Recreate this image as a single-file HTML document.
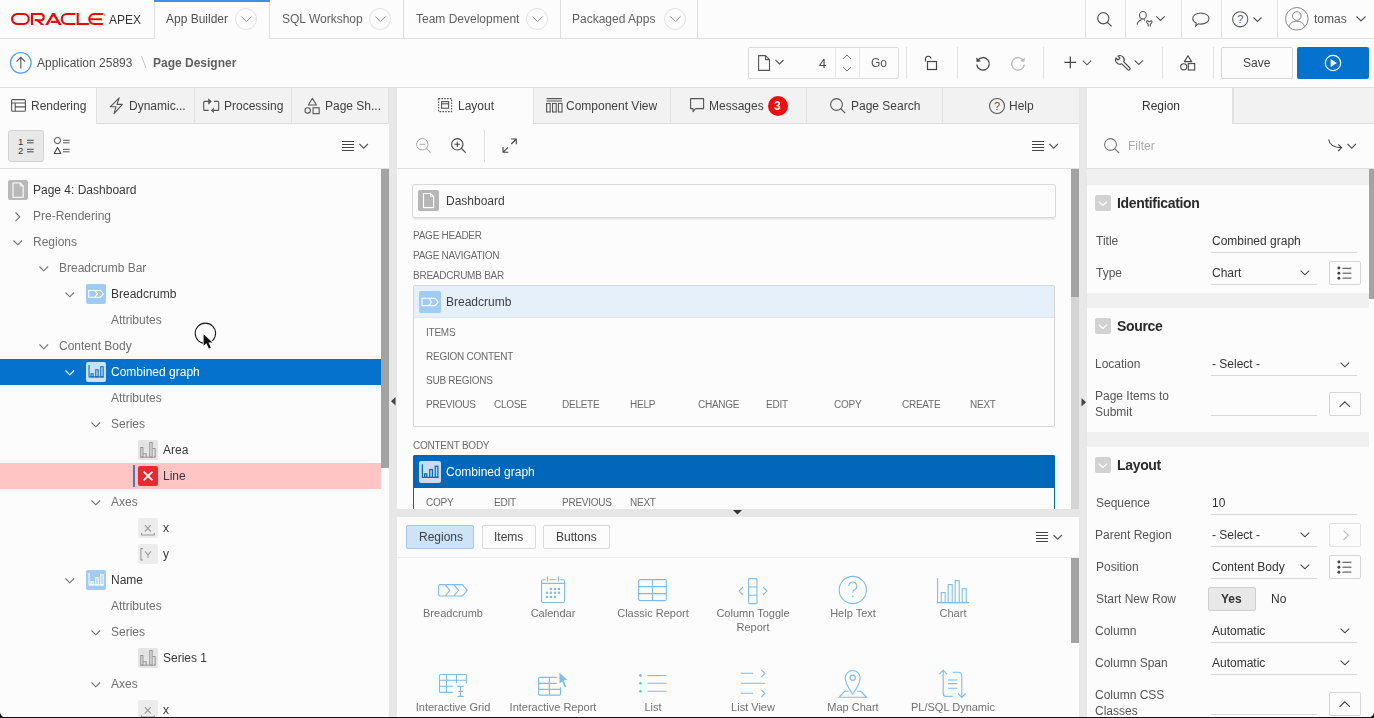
<!DOCTYPE html>
<html><head><meta charset="utf-8">
<style>
*{box-sizing:border-box;margin:0;padding:0}
html,body{width:1374px;height:718px;overflow:hidden;background:#fcfcfc;font-family:"Liberation Sans",sans-serif;color:#404040;position:relative}
.a{position:absolute}
svg{position:absolute;overflow:visible}
.t{position:absolute;white-space:nowrap;line-height:12px;font-size:12px;will-change:transform}
.ln{position:absolute;background:#dfdfdf}
.circ{position:absolute;width:22px;height:22px;border:1px solid #e2e2e2;border-radius:50%}
.tab{position:absolute;background:#f2f2f2;border-right:1px solid #e2e2e2;border-bottom:1px solid #dcdcdc;height:36px;top:88px}
.tab.act{background:#fcfcfc;border-bottom:none}
.sep{position:absolute;width:1px;background:#e0e0e0}
.g{color:#707070}
.d{color:#383838}
</style></head>
<body>
<!-- ============ HEADER ============ -->
<div class="ln" style="left:0;top:38px;width:154px;height:1px"></div>
<svg style="left:11px;top:12.8px" width="96" height="12" viewBox="0 0 96 12">
  <g fill="none" stroke="#f80000" stroke-width="2.1">
    <rect x="1.05" y="1.05" width="16.7" height="9.9" rx="4.95"/>
    <path d="M20.95 12 V1.05 H29.8 A3.08 3.08 0 0 1 29.8 7.2 H23.8"/>
    <path d="M64 1.05 H55.7 A4.95 4.95 0 0 0 55.7 10.95 H64"/>
    <path d="M66.7 0 V10.95 H77.8"/>
    <path d="M91.8 1.05 H83.2 A4.95 4.95 0 0 0 83.2 10.95 H91.8 M79 6.2 H90.8"/>
  </g>
  <g fill="#f80000">
    <path d="M23.6 6.1 H26.8 L33.2 12 H30 Z"/>
    <path d="M34.2 12 L41.3 0 H43.5 L50.6 12 H47.9 L42.4 2.7 L37 12 Z"/>
    <path d="M40.4 7.8 H47 L48.3 10 H39.6 Z"/>
  </g>
  <circle cx="93.6" cy="2" r="0.9" fill="#f88"/>
</svg>
<div class="t" style="left:109px;top:14px;color:#333">APEX</div>
<!-- nav tabs -->
<div class="a" style="left:154px;top:0;width:116px;height:39px;border-left:1px solid #dfdfdf;border-right:1px solid #dfdfdf"></div>
<div class="a" style="left:154px;top:0;width:116px;height:2px;background:#3b90e8"></div>
<div class="t" style="left:166px;top:13px;color:#505050">App Builder</div>
<div class="circ" style="left:235px;top:8px"></div>
<svg style="left:241px;top:16px" width="12" height="7"><path d="M0.5 0.6 L5.5 5.6 L10.5 0.6" fill="none" stroke="#888" stroke-width="1"/></svg>

<div class="ln" style="left:269px;top:38px;width:816px;height:1px"></div>
<div class="t" style="left:282px;top:13px;color:#606060">SQL Workshop</div>
<div class="circ" style="left:369px;top:8px"></div>
<svg style="left:375px;top:16px" width="12" height="7"><path d="M0.5 0.6 L5.5 5.6 L10.5 0.6" fill="none" stroke="#888" stroke-width="1"/></svg>
<div class="sep" style="left:403px;top:0;height:39px;background:#dfdfdf"></div>
<div class="t" style="left:416px;top:13px;color:#606060">Team Development</div>
<div class="circ" style="left:526px;top:8px"></div>
<svg style="left:532px;top:16px" width="12" height="7"><path d="M0.5 0.6 L5.5 5.6 L10.5 0.6" fill="none" stroke="#888" stroke-width="1"/></svg>
<div class="sep" style="left:560px;top:0;height:39px;background:#dfdfdf"></div>
<div class="t" style="left:572px;top:13px;color:#606060">Packaged Apps</div>
<div class="circ" style="left:664px;top:8px"></div>
<svg style="left:670px;top:16px" width="12" height="7"><path d="M0.5 0.6 L5.5 5.6 L10.5 0.6" fill="none" stroke="#888" stroke-width="1"/></svg>
<div class="sep" style="left:697px;top:0;height:39px;background:#dfdfdf"></div>
<!-- right header icons -->
<div class="ln" style="left:1085px;top:38px;width:289px;height:1px"></div>
<div class="sep" style="left:1085px;top:0;height:39px;background:#e2e2e2"></div>
<div class="sep" style="left:1125px;top:0;height:39px;background:#e2e2e2"></div>
<div class="sep" style="left:1181px;top:0;height:39px;background:#e2e2e2"></div>
<div class="sep" style="left:1221px;top:0;height:39px;background:#e2e2e2"></div>
<div class="sep" style="left:1277px;top:0;height:39px;background:#e2e2e2"></div>
<!-- search -->
<svg style="left:1097px;top:12px" width="16" height="15"><circle cx="6.3" cy="6.3" r="5.6" fill="none" stroke="#555" stroke-width="1.2"/><path d="M10.3 10.3 L14.6 14.4" stroke="#555" stroke-width="1.3"/></svg>
<!-- user wrench -->
<svg style="left:1136px;top:11px" width="30" height="17"><ellipse cx="6.9" cy="4.3" rx="3.4" ry="3.8" fill="none" stroke="#555" stroke-width="1.1"/><path d="M1.2 13.6 C1.4 10.6 3.4 9.6 5.6 8.6 M8.2 8.4 L8.7 9.7" fill="none" stroke="#555" stroke-width="1.1"/><path d="M11.2 9.5 C10.1 10.8 10.5 12.3 12.2 13 V15.5 M15.4 9.5 C16.5 10.8 16.1 12.3 14.4 13 V15.5 M11.2 9.5 L13.3 10.9 L15.4 9.5" fill="none" stroke="#555" stroke-width="1.1" stroke-linejoin="round"/><path d="M20.3 5.3 L24.5 9.5 L28.7 5.3" fill="none" stroke="#555" stroke-width="1.1"/></svg>
<!-- chat -->
<svg style="left:1192px;top:12px" width="18" height="15"><path d="M8.8 1 C13.5 1 17 3.5 17 6.6 C17 9.7 13.5 12.1 8.8 12.1 C7.8 12.1 7 12 6.2 11.8 L3.6 14.2 L4.2 11 C2.1 10 0.7 8.4 0.7 6.6 C0.7 3.5 4.2 1 8.8 1 Z" fill="none" stroke="#555" stroke-width="1.1"/></svg>
<!-- help -->
<svg style="left:1232px;top:11px" width="30" height="17"><circle cx="8.2" cy="8.3" r="7.6" fill="none" stroke="#555" stroke-width="1.1"/><text x="8.2" y="12.4" font-family="Liberation Sans" font-size="11" text-anchor="middle" fill="#555">?</text><path d="M21.5 6.5 L25.5 10.5 L29.5 6.5" fill="none" stroke="#555" stroke-width="1.1"/></svg>
<!-- user -->
<svg style="left:1285px;top:7px" width="25" height="25"><circle cx="11.8" cy="11.8" r="11.3" fill="none" stroke="#888" stroke-width="1"/><circle cx="11.8" cy="9" r="4.3" fill="none" stroke="#888" stroke-width="1"/><path d="M4 20 C5 15.5 8 14.3 11.8 14.3 C15.6 14.3 18.6 15.5 19.6 20" fill="none" stroke="#888" stroke-width="1"/></svg>
<div class="t" style="left:1314px;top:13px;color:#555">tomas</div>
<svg style="left:1356px;top:16px" width="10" height="6"><path d="M0.5 0.5 L5 5 L9.5 0.5" fill="none" stroke="#555" stroke-width="1.1"/></svg>

<!-- ============ TOOLBAR ============ -->
<div class="ln" style="left:0;top:87px;width:1374px;height:1px"></div>
<svg style="left:10px;top:52px" width="23" height="23"><circle cx="10.8" cy="10.8" r="10.3" fill="none" stroke="#4a9de8" stroke-width="1.2"/><path d="M10.8 16.5 V5.5 M6.5 9.6 L10.8 5.3 L15.1 9.6" fill="none" stroke="#555" stroke-width="1.1"/></svg>
<div class="t" style="left:37px;top:57px;color:#505050">Application 25893</div>
<svg style="left:141px;top:55px" width="6" height="14"><path d="M0.5 1 L5 13" stroke="#bbb" stroke-width="0.9"/></svg>
<div class="t" style="left:153px;top:57px;color:#606060;font-weight:bold">Page Designer</div>

<!-- page selector -->
<div class="a" style="left:748px;top:47px;width:151px;height:32px;border:1px solid #dcdcdc;border-radius:2px;background:#fcfcfc"></div>
<div class="sep" style="left:835px;top:48px;height:30px;background:#e6e6e6"></div>
<div class="sep" style="left:859px;top:48px;height:30px;background:#e6e6e6"></div>
<svg style="left:758px;top:55px" width="30" height="16"><path d="M0.6 0.6 H7.5 L11.5 4.6 V15.4 H0.6 Z M7.5 0.6 V4.6 H11.5" fill="none" stroke="#555" stroke-width="1.1" stroke-linejoin="round"/><path d="M17.5 5 L21.5 9 L25.5 5" fill="none" stroke="#555" stroke-width="1.1"/></svg>
<div class="t" style="left:819px;top:57px;font-size:13px;line-height:13px;color:#444">4</div>
<svg style="left:842px;top:54px" width="11" height="20"><path d="M1 5 L5 1 L9 5 M1 13 L5 17 L9 13" fill="none" stroke="#777" stroke-width="1"/></svg>
<div class="t" style="left:871px;top:57px;color:#555">Go</div>
<div class="sep" style="left:906px;top:47px;height:32px"></div>
<svg style="left:923px;top:55px" width="16" height="16"><path d="M2.5 6.5 V3.5 A2.8 2.8 0 0 1 8 3.5" fill="none" stroke="#444" stroke-width="1.2"/><rect x="4.5" y="6.5" width="9" height="8" fill="none" stroke="#444" stroke-width="1.2"/></svg>
<div class="sep" style="left:957px;top:47px;height:32px"></div>
<svg style="left:975px;top:56px" width="16" height="16"><path d="M2.8 4.2 A6.3 6.3 0 1 1 1.7 8.6" fill="none" stroke="#444" stroke-width="1.3"/><path d="M1.2 1.5 L1.6 6 L6 5.2 Z" fill="#444"/></svg>
<svg style="left:1011px;top:56px" width="16" height="16"><path d="M12.2 4.2 A6.3 6.3 0 1 0 13.3 8.6" fill="none" stroke="#bbb" stroke-width="1.3"/><path d="M13.8 1.5 L13.4 6 L9 5.2 Z" fill="#bbb"/></svg>
<div class="sep" style="left:1043px;top:47px;height:32px"></div>
<svg style="left:1064px;top:56px" width="28" height="14"><path d="M6.3 0.5 V12.3 M0.4 6.4 H12.2" fill="none" stroke="#444" stroke-width="1.2"/><path d="M18.8 4.6 L23 8.8 L27.2 4.6" fill="none" stroke="#555" stroke-width="1.1"/></svg>
<svg style="left:1115px;top:55px" width="30" height="17"><g transform="translate(4.9 4.9) rotate(45)"><path d="M-4.1 -1.4 H-1.2 V1.4 H-4.1 A4.35 4.35 0 0 0 4.1 1.4 H12.5 A1.4 1.4 0 0 0 12.5 -1.4 H4.1 A4.35 4.35 0 0 0 -4.1 -1.4 Z" fill="none" stroke="#444" stroke-width="1.1" stroke-linejoin="round"/></g><path d="M19.6 5.3 L23.8 9.5 L28 5.3" fill="none" stroke="#555" stroke-width="1.1"/></svg>
<div class="sep" style="left:1162px;top:47px;height:32px"></div>
<svg style="left:1180px;top:55px" width="16" height="16"><path d="M8 0.7 L11.6 6.6 H4.4 Z" fill="none" stroke="#444" stroke-width="1.1" stroke-linejoin="round"/><circle cx="3.7" cy="11.8" r="3.1" fill="none" stroke="#444" stroke-width="1.1"/><rect x="8.3" y="8.6" width="6.4" height="6.4" fill="none" stroke="#444" stroke-width="1.1"/></svg>
<div class="sep" style="left:1213px;top:47px;height:32px"></div>
<div class="a" style="left:1221px;top:47px;width:72px;height:32px;border:1px solid #d6d6d6;border-radius:2px;background:#fcfcfc"></div>
<div class="t" style="left:1243px;top:57px;color:#444">Save</div>
<div class="a" style="left:1297px;top:47px;width:72px;height:32px;border-radius:2px;background:#0572ce"></div>
<svg style="left:1324px;top:54px" width="18" height="18"><circle cx="9" cy="9" r="7.7" fill="none" stroke="#fff" stroke-width="1.2"/><path d="M6.6 4.9 L12.9 9 L6.6 13.1 Z" fill="#fff"/></svg>

<!-- ============ TABS ROW ============ -->
<!-- left panel tabs -->
<div class="tab act" style="left:0;width:97px"></div>
<div class="tab" style="left:97px;width:98px;border-left:none"></div>
<div class="tab" style="left:195px;width:97px"></div>
<div class="tab" style="left:292px;width:97px"></div>
<svg style="left:11px;top:99px" width="16" height="14"><rect x="0.6" y="0.6" width="13.8" height="11.6" rx="1" fill="none" stroke="#555" stroke-width="1.1"/><path d="M0.6 4 H14.4 M4.2 4 V12.2 M4.2 7.9 H14.4" fill="none" stroke="#555" stroke-width="1.1"/></svg>
<div class="t" style="left:31px;top:100px;color:#404040">Rendering</div>
<svg style="left:109px;top:97px" width="16" height="18"><path d="M10.2 0.8 L1.2 9.8 H7 L5 16.6 L13.4 7.4 H8 Z" fill="none" stroke="#555" stroke-width="1.1" stroke-linejoin="round"/></svg>
<div class="t" style="left:129px;top:100px;color:#404040">Dynamic...</div>
<svg style="left:202px;top:97px" width="20" height="18"><path d="M6.7 4.4 H2.7 A1 1 0 0 0 1.7 5.4 V12.4 A1 1 0 0 0 2.7 13.4 H6.7 M12 4.4 H15.7 A1 1 0 0 1 16.7 5.4 V12.4 A1 1 0 0 1 15.7 13.4 H11.5" fill="none" stroke="#555" stroke-width="1.1"/><path d="M6.2 1.2 L9.8 4.4 L6.2 7.7 Z M8.9 13.4 L11.8 10.6 V16.1 Z" fill="#555"/></svg>
<div class="t" style="left:224px;top:100px;color:#404040">Processing</div>
<svg style="left:303px;top:96px" width="18" height="19"><path d="M9.4 2.3 L13.4 9 H5.4 Z" fill="none" stroke="#555" stroke-width="1.1" stroke-linejoin="round"/><circle cx="4.7" cy="14.45" r="2.7" fill="none" stroke="#555" stroke-width="1.1"/><rect x="10.05" y="11.75" width="6.1" height="5.9" fill="none" stroke="#555" stroke-width="1.1"/></svg>
<div class="t" style="left:325px;top:100px;color:#404040">Page Sh...</div>
<!-- splitters -->
<div class="a" style="left:389px;top:88px;width:8px;height:630px;background:#e8e8e8"></div>
<div class="a" style="left:1079px;top:88px;width:8px;height:630px;background:#e8e8e8"></div>
<!-- middle tabs -->
<div class="tab act" style="left:397px;width:137px"></div>
<div class="tab" style="left:534px;width:137px;border-left:none"></div>
<div class="tab" style="left:671px;width:136px"></div>
<div class="tab" style="left:807px;width:136px"></div>
<div class="tab" style="left:943px;width:136px;border-right:none"></div>
<svg style="left:438px;top:98px" width="15" height="15"><rect x="0.6" y="0.6" width="13" height="13" fill="none" stroke="#555" stroke-width="1.1" stroke-dasharray="1.6 1.2"/><rect x="3.6" y="3.6" width="7" height="6.6" fill="none" stroke="#555" stroke-width="1.1"/><path d="M3.6 5.8 H10.6" stroke="#555" stroke-width="1.1"/></svg>
<div class="t" style="left:458px;top:100px;color:#404040">Layout</div>
<svg style="left:546px;top:98px" width="17" height="15"><path d="M0.6 0.6 H16 M0.6 3 H16" fill="none" stroke="#555" stroke-width="1.1"/><rect x="0.6" y="5.5" width="3.6" height="8.5" fill="none" stroke="#555" stroke-width="1.1"/><rect x="6.6" y="5.5" width="3.6" height="8.5" fill="none" stroke="#555" stroke-width="1.1"/><rect x="12.4" y="5.5" width="3.6" height="8.5" fill="none" stroke="#555" stroke-width="1.1"/></svg>
<div class="t" style="left:566px;top:100px;color:#404040">Component View</div>
<svg style="left:690px;top:98px" width="15" height="16"><path d="M0.6 0.6 H13.6 V10.6 H5.5 L3 13.6 V10.6 H0.6 Z" fill="none" stroke="#555" stroke-width="1.1" stroke-linejoin="round"/></svg>
<div class="t" style="left:709px;top:100px;color:#404040">Messages</div>
<div class="a" style="left:768px;top:96px;width:20px;height:20px;border-radius:50%;background:#f00d0d"></div>
<div class="t" style="left:774px;top:100px;color:#fff;font-weight:bold">3</div>
<svg style="left:830px;top:98px" width="17" height="17"><circle cx="6.5" cy="6.5" r="5.9" fill="none" stroke="#555" stroke-width="1.1"/><path d="M10.7 10.7 L15.2 15.2" stroke="#555" stroke-width="1.2"/></svg>
<div class="t" style="left:851px;top:100px;color:#404040">Page Search</div>
<svg style="left:989px;top:98px" width="17" height="17"><circle cx="8" cy="8" r="7.5" fill="none" stroke="#555" stroke-width="1.1"/><text x="8" y="12" font-family="Liberation Sans" font-size="11" text-anchor="middle" fill="#555">?</text></svg>
<div class="t" style="left:1009px;top:100px;color:#404040">Help</div>
<!-- right tabs -->
<div class="tab act" style="left:1087px;width:146px"></div>
<div class="tab" style="left:1233px;width:141px;border-right:none;border-left:1px solid #e2e2e2"></div>
<div class="t" style="left:1142px;top:100px;color:#333">Region</div>

<!-- ============ LEFT PANEL ============ -->
<div class="ln" style="left:0;top:168px;width:389px;height:1px"></div>
<div class="a" style="left:8px;top:130px;width:36px;height:32px;background:#e8e8e8;border:1px solid #d2d2d2;border-radius:3px"></div>
<svg style="left:18px;top:137px" width="17" height="18"><text x="0" y="7.8" font-family="Liberation Sans" font-size="9.5" fill="#333">1</text><text x="0" y="16.8" font-family="Liberation Sans" font-size="9.5" fill="#333">2</text><path d="M9 3.3 H15.6 M9 5.8 H15.6 M9 12.3 H15.6 M9 14.8 H15.6" stroke="#333" stroke-width="0.9"/></svg>
<svg style="left:53px;top:137px" width="17" height="18"><circle cx="4.5" cy="3.5" r="3.1" fill="none" stroke="#444" stroke-width="1"/><path d="M4.5 10.4 L7.8 16.5 H1.2 Z" fill="none" stroke="#444" stroke-width="1.1" stroke-linejoin="round"/><path d="M10 3.3 H16.6 M10 5.8 H16.6 M10 12.3 H16.6 M10 14.8 H16.6" stroke="#444" stroke-width="0.9"/></svg>
<svg style="left:342px;top:141px" width="28" height="12"><path d="M0 0.5 H12 M0 3.5 H12 M0 6.5 H12 M0 9.5 H12" stroke="#444" stroke-width="1"/><path d="M17.5 3 L21.7 7.2 L25.9 3" fill="none" stroke="#555" stroke-width="1.1"/></svg>
<div class="a" style="left:381px;top:169px;width:8px;height:299px;background:#a3a3a3"></div>
<div class="a" style="left:8px;top:180px;width:20px;height:20px;background:#b9b9b9;border-radius:2px"></div>
<svg style="left:8px;top:180px" width="20" height="20"><path d="M5 3 H12.2 L15.2 6 V17.3 H5 Z" fill="none" stroke="#fff" stroke-width="1.1"/><path d="M12.2 3 V6 H15.2" fill="none" stroke="#fff" stroke-width="0.8"/></svg>
<div class="t" style="left:33px;top:184px;color:#383838">Page 4: Dashboard</div>
<svg style="left:15px;top:212px" width="6" height="10"><path d="M0.5 0.5 L4.8 4.8 L0.5 9.1" fill="none" stroke="#707070" stroke-width="1.1"/></svg>
<div class="t" style="left:33px;top:210px;color:#707070">Pre-Rendering</div>
<svg style="left:13px;top:240px" width="10" height="6"><path d="M0.5 0.5 L4.8 4.8 L9.1 0.5" fill="none" stroke="#707070" stroke-width="1.1"/></svg>
<div class="t" style="left:33px;top:236px;color:#707070">Regions</div>
<svg style="left:39px;top:266px" width="10" height="6"><path d="M0.5 0.5 L4.8 4.8 L9.1 0.5" fill="none" stroke="#707070" stroke-width="1.1"/></svg>
<div class="t" style="left:59px;top:262px;color:#707070">Breadcrumb Bar</div>
<svg style="left:65px;top:292px" width="10" height="6"><path d="M0.5 0.5 L4.8 4.8 L9.1 0.5" fill="none" stroke="#707070" stroke-width="1.1"/></svg>
<div class="a" style="left:86px;top:284px;width:20px;height:20px;background:#9fcbf4;border-radius:2px"></div>
<svg style="left:86px;top:284px" width="20" height="20"><path d="M2.7 6.5 H14.6 L17.4 9.85 L14.6 13.2 H2.7 Z M8.9 6.5 L11.4 9.85 L8.9 13.2" fill="none" stroke="#fff" stroke-width="1.1" stroke-linejoin="miter"/></svg>
<div class="t" style="left:111px;top:288px;color:#383838">Breadcrumb</div>
<div class="t" style="left:111px;top:314px;color:#707070">Attributes</div>
<svg style="left:39px;top:344px" width="10" height="6"><path d="M0.5 0.5 L4.8 4.8 L9.1 0.5" fill="none" stroke="#707070" stroke-width="1.1"/></svg>
<div class="t" style="left:59px;top:340px;color:#707070">Content Body</div>
<div class="a" style="left:0;top:359px;width:381px;height:26px;background:#0572ce"></div>
<svg style="left:65px;top:370px" width="10" height="6"><path d="M0.5 0.5 L4.8 4.8 L9.1 0.5" fill="none" stroke="#fff" stroke-width="1.1"/></svg>
<div class="a" style="left:86px;top:362px;width:20px;height:20px;background:#cde0f4;border-radius:2px"></div>
<svg style="left:86px;top:362px" width="20" height="20"><path d="M3.05 3 V14.85 H17.7" fill="none" stroke="#0572ce" stroke-width="1.1"/><rect x="5.05" y="11.75" width="2.1" height="3.1" fill="none" stroke="#0572ce" stroke-width="1.1"/><rect x="9.75" y="7.75" width="2.4" height="7.1" fill="none" stroke="#0572ce" stroke-width="1.1"/><rect x="14.75" y="4.75" width="2.4" height="10.1" fill="none" stroke="#0572ce" stroke-width="1.1"/></svg>
<div class="t" style="left:111px;top:366px;color:#ffffff">Combined graph</div>
<div class="t" style="left:111px;top:392px;color:#707070">Attributes</div>
<svg style="left:91px;top:422px" width="10" height="6"><path d="M0.5 0.5 L4.8 4.8 L9.1 0.5" fill="none" stroke="#707070" stroke-width="1.1"/></svg>
<div class="t" style="left:111px;top:418px;color:#707070">Series</div>
<div class="a" style="left:138px;top:440px;width:20px;height:20px;background:#e4e4e4;border-radius:2px"></div>
<svg style="left:138px;top:440px" width="20" height="20"><g fill="none" stroke="#9a9a9a" stroke-width="1.1"><rect x="2.75" y="7.55" width="2.2" height="9.6"/><path d="M4.95 13.75 H8.15 V17.15"/><rect x="11.75" y="2.55" width="2.4" height="14.6"/><path d="M14.15 8.55 H17.15 V17.15"/><path d="M2.75 17.15 H17.15"/></g></svg>
<div class="t" style="left:163px;top:444px;color:#383838">Area</div>
<div class="a" style="left:0;top:463px;width:381px;height:26px;background:#ffc4c4"></div>
<div class="a" style="left:133px;top:465px;width:2px;height:22px;background:#4a78c4"></div>
<div class="a" style="left:138px;top:466px;width:20px;height:20px;background:#e82a2e;border-radius:2px"></div>
<svg style="left:138px;top:466px" width="20" height="20"><path d="M5.6 5.6 L14.4 14.4 M14.4 5.6 L5.6 14.4" stroke="#fff" stroke-width="1.8"/></svg>
<div class="t" style="left:163px;top:470px;color:#383838">Line</div>
<svg style="left:91px;top:500px" width="10" height="6"><path d="M0.5 0.5 L4.8 4.8 L9.1 0.5" fill="none" stroke="#707070" stroke-width="1.1"/></svg>
<div class="t" style="left:111px;top:496px;color:#707070">Axes</div>
<div class="a" style="left:138px;top:518px;width:20px;height:20px;background:#ececec;border-radius:2px"></div>
<svg style="left:138px;top:518px" width="20" height="20"><path d="M6.9 7.2 L12.8 13.5 M12.8 7.2 L6.9 13.5 M3.5 15 V17 H16.3 V15" fill="none" stroke="#9a9a9a" stroke-width="1.1"/></svg>
<div class="t" style="left:163px;top:522px;color:#383838">x</div>
<div class="a" style="left:138px;top:544px;width:20px;height:20px;background:#ececec;border-radius:2px"></div>
<svg style="left:138px;top:544px" width="20" height="20"><path d="M5 4.6 H2.9 V16 H5 M7.1 7.3 L10 11 L12.9 7.3 M10 11 V13.8" fill="none" stroke="#9a9a9a" stroke-width="1.1"/></svg>
<div class="t" style="left:163px;top:548px;color:#383838">y</div>
<svg style="left:65px;top:578px" width="10" height="6"><path d="M0.5 0.5 L4.8 4.8 L9.1 0.5" fill="none" stroke="#707070" stroke-width="1.1"/></svg>
<div class="a" style="left:86px;top:570px;width:20px;height:20px;background:#9fcbf4;border-radius:2px"></div>
<svg style="left:86px;top:570px" width="20" height="20"><path d="M3.05 3 V14.85 H17.7" fill="none" stroke="#fff" stroke-width="1.1"/><rect x="5.05" y="11.75" width="2.1" height="3.1" fill="none" stroke="#fff" stroke-width="1.1"/><rect x="9.75" y="7.75" width="2.4" height="7.1" fill="none" stroke="#fff" stroke-width="1.1"/><rect x="14.75" y="4.75" width="2.4" height="10.1" fill="none" stroke="#fff" stroke-width="1.1"/></svg>
<div class="t" style="left:111px;top:574px;color:#383838">Name</div>
<div class="t" style="left:111px;top:600px;color:#707070">Attributes</div>
<svg style="left:91px;top:630px" width="10" height="6"><path d="M0.5 0.5 L4.8 4.8 L9.1 0.5" fill="none" stroke="#707070" stroke-width="1.1"/></svg>
<div class="t" style="left:111px;top:626px;color:#707070">Series</div>
<div class="a" style="left:138px;top:648px;width:20px;height:20px;background:#e4e4e4;border-radius:2px"></div>
<svg style="left:138px;top:648px" width="20" height="20"><g fill="none" stroke="#9a9a9a" stroke-width="1.1"><rect x="2.75" y="7.55" width="2.2" height="9.6"/><path d="M4.95 13.75 H8.15 V17.15"/><rect x="11.75" y="2.55" width="2.4" height="14.6"/><path d="M14.15 8.55 H17.15 V17.15"/><path d="M2.75 17.15 H17.15"/></g></svg>
<div class="t" style="left:163px;top:652px;color:#383838">Series 1</div>
<svg style="left:91px;top:682px" width="10" height="6"><path d="M0.5 0.5 L4.8 4.8 L9.1 0.5" fill="none" stroke="#707070" stroke-width="1.1"/></svg>
<div class="t" style="left:111px;top:678px;color:#707070">Axes</div>
<div class="a" style="left:138px;top:700px;width:20px;height:20px;background:#ececec;border-radius:2px"></div>
<svg style="left:138px;top:700px" width="20" height="20"><path d="M6.9 7.2 L12.8 13.5 M12.8 7.2 L6.9 13.5 M3.5 15 V17 H16.3 V15" fill="none" stroke="#9a9a9a" stroke-width="1.1"/></svg>
<div class="t" style="left:163px;top:704px;color:#383838">x</div>
<svg style="left:194px;top:322px" width="26" height="30"><circle cx="11.4" cy="11.3" r="10.2" fill="none" stroke="#1a1a1a" stroke-width="1.05"/><g transform="translate(9.6 12.2)"><path d="M0 0 V11.6 L2.8 9 L5.2 14.4 L7.2 13.5 L4.9 8.4 L8.8 8.2 Z" fill="#111" stroke="#fff" stroke-width="1.6" stroke-linejoin="round" paint-order="stroke"/></g></svg>

<!-- ============ MIDDLE PANEL ============ -->
<div class="ln" style="left:397px;top:168px;width:682px;height:1px"></div>
<svg style="left:416px;top:138px" width="16" height="16"><circle cx="6.3" cy="6.3" r="5.7" fill="none" stroke="#aaa" stroke-width="1"/><path d="M3.5 6.3 H9.1" stroke="#aaa" stroke-width="1"/><path d="M10.4 10.4 L14.6 14.6" stroke="#aaa" stroke-width="1.1"/></svg>
<svg style="left:451px;top:138px" width="16" height="16"><circle cx="6.3" cy="6.3" r="5.7" fill="none" stroke="#444" stroke-width="1.1"/><path d="M3.5 6.3 H9.1 M6.3 3.5 V9.1" stroke="#444" stroke-width="1.1"/><path d="M10.4 10.4 L14.6 14.6" stroke="#444" stroke-width="1.2"/></svg>
<div class="sep" style="left:484px;top:130px;height:32px"></div>
<svg style="left:502px;top:138px" width="16" height="16"><path d="M1 14.3 L6 9.3 M1 9 V14.3 H6.3 M14.3 1 L9.3 6 M9 1 H14.3 V6.3" fill="none" stroke="#444" stroke-width="1.1"/></svg>
<svg style="left:1032px;top:141px" width="28" height="12"><path d="M0 0.5 H12 M0 3.5 H12 M0 6.5 H12 M0 9.5 H12" stroke="#444" stroke-width="1"/><path d="M17.5 3 L21.7 7.2 L25.9 3" fill="none" stroke="#555" stroke-width="1.1"/></svg>
<div class="a" style="left:1071px;top:169px;width:8px;height:340px;background:#d4d4d4"></div>
<div class="a" style="left:1071px;top:169px;width:8px;height:128px;background:#a3a3a3"></div>
<svg style="left:391px;top:397px" width="5" height="9"><path d="M4.5 0 V8.5 L0 4.25 Z" fill="#444"/></svg>
<svg style="left:1081px;top:398px" width="5" height="9"><path d="M0.5 0 V8.5 L5 4.25 Z" fill="#444"/></svg>
<div class="a" style="left:412px;top:184px;width:644px;height:34px;border:1px solid #d8d8d8;border-radius:3px;background:#fcfcfc;box-shadow:0 2px 0 #ececec"></div>
<div class="a" style="left:418px;top:190px;width:21px;height:21px;background:#b6b6b6;border-radius:2px"></div>
<svg style="left:418px;top:190px" width="21" height="21"><path d="M5.5 3.5 H12.6 L15.6 6.5 V17.6 H5.5 Z" fill="none" stroke="#fff" stroke-width="1.1"/><path d="M12.6 3.5 V6.5 H15.6" fill="none" stroke="#fff" stroke-width="0.8"/></svg>
<div class="t" style="left:446px;top:195px;color:#404040">Dashboard</div>
<div class="t" style="left:413px;top:231px;font-size:10px;line-height:10px;color:#6a6a6a;letter-spacing:-0.25px">PAGE HEADER</div>
<div class="t" style="left:413px;top:251px;font-size:10px;line-height:10px;color:#6a6a6a;letter-spacing:-0.25px">PAGE NAVIGATION</div>
<div class="t" style="left:413px;top:271px;font-size:10px;line-height:10px;color:#6a6a6a;letter-spacing:-0.25px">BREADCRUMB BAR</div>
<div class="a" style="left:413px;top:285px;width:642px;height:142px;border:1px solid #d6d6d6;border-radius:2px;background:#fcfcfc"></div>
<div class="a" style="left:414px;top:286px;width:640px;height:32px;background:#e6f0fa;border-bottom:1px solid #dde5ee"></div>
<div class="a" style="left:419px;top:291px;width:22px;height:22px;background:#9fcbf4;border-radius:2px"></div>
<svg style="left:419px;top:291px" width="22" height="22"><path d="M3 7.2 H16 L19.1 10.9 L16 14.6 H3 Z M9.8 7.2 L12.5 10.9 L9.8 14.6" fill="none" stroke="#fff" stroke-width="1.1"/></svg>
<div class="t" style="left:446px;top:296px;color:#404040">Breadcrumb</div>
<div class="t" style="left:426px;top:328px;font-size:10px;line-height:10px;color:#6a6a6a;letter-spacing:-0.25px">ITEMS</div>
<div class="t" style="left:426px;top:352px;font-size:10px;line-height:10px;color:#6a6a6a;letter-spacing:-0.25px">REGION CONTENT</div>
<div class="t" style="left:426px;top:376px;font-size:10px;line-height:10px;color:#6a6a6a;letter-spacing:-0.25px">SUB REGIONS</div>
<div class="t" style="left:426px;top:400px;font-size:10px;line-height:10px;color:#6a6a6a;letter-spacing:-0.25px">PREVIOUS</div>
<div class="t" style="left:494px;top:400px;font-size:10px;line-height:10px;color:#6a6a6a;letter-spacing:-0.25px">CLOSE</div>
<div class="t" style="left:562px;top:400px;font-size:10px;line-height:10px;color:#6a6a6a;letter-spacing:-0.25px">DELETE</div>
<div class="t" style="left:630px;top:400px;font-size:10px;line-height:10px;color:#6a6a6a;letter-spacing:-0.25px">HELP</div>
<div class="t" style="left:698px;top:400px;font-size:10px;line-height:10px;color:#6a6a6a;letter-spacing:-0.25px">CHANGE</div>
<div class="t" style="left:766px;top:400px;font-size:10px;line-height:10px;color:#6a6a6a;letter-spacing:-0.25px">EDIT</div>
<div class="t" style="left:834px;top:400px;font-size:10px;line-height:10px;color:#6a6a6a;letter-spacing:-0.25px">COPY</div>
<div class="t" style="left:902px;top:400px;font-size:10px;line-height:10px;color:#6a6a6a;letter-spacing:-0.25px">CREATE</div>
<div class="t" style="left:970px;top:400px;font-size:10px;line-height:10px;color:#6a6a6a;letter-spacing:-0.25px">NEXT</div>
<div class="t" style="left:413px;top:441px;font-size:10px;line-height:10px;color:#6a6a6a;letter-spacing:-0.25px">CONTENT BODY</div>
<div class="a" style="left:413px;top:455px;width:642px;height:60px;border:1px solid #0067b9;border-radius:2px 2px 0 0;background:#fcfcfc"></div>
<div class="a" style="left:413px;top:455px;width:642px;height:33px;background:#0067b9;border-radius:2px 2px 0 0"></div>
<div class="a" style="left:419px;top:461px;width:22px;height:22px;background:#c9dcf0;border-radius:2px"></div>
<svg style="left:419px;top:461px" width="22" height="22"><g transform="scale(1.1)"><path d="M3.05 3 V14.85 H17.7" fill="none" stroke="#0067b9" stroke-width="1.1"/><rect x="5.05" y="11.75" width="2.1" height="3.1" fill="none" stroke="#0067b9" stroke-width="1.1"/><rect x="9.75" y="7.75" width="2.4" height="7.1" fill="none" stroke="#0067b9" stroke-width="1.1"/><rect x="14.75" y="4.75" width="2.4" height="10.1" fill="none" stroke="#0067b9" stroke-width="1.1"/></g></svg>
<div class="t" style="left:446px;top:466px;color:#fff">Combined graph</div>
<div class="t" style="left:426px;top:498px;font-size:10px;line-height:10px;color:#6a6a6a;letter-spacing:-0.25px">COPY</div>
<div class="t" style="left:494px;top:498px;font-size:10px;line-height:10px;color:#6a6a6a;letter-spacing:-0.25px">EDIT</div>
<div class="t" style="left:562px;top:498px;font-size:10px;line-height:10px;color:#6a6a6a;letter-spacing:-0.25px">PREVIOUS</div>
<div class="t" style="left:630px;top:498px;font-size:10px;line-height:10px;color:#6a6a6a;letter-spacing:-0.25px">NEXT</div>
<div class="a" style="left:397px;top:509px;width:682px;height:8px;background:#e6e6e6"></div>
<svg style="left:733px;top:510px" width="10" height="5"><path d="M0 0 H9 L4.5 4.5 Z" fill="#333"/></svg>
<div class="a" style="left:406px;top:525px;width:68px;height:24px;background:#cde3f7;border:1px solid #a8c6e2;border-radius:2px"></div>
<div class="t" style="left:419px;top:531px;color:#404040">Regions</div>
<div class="a" style="left:482px;top:525px;width:54px;height:24px;background:#fcfcfc;border:1px solid #dadada;border-radius:2px"></div>
<div class="t" style="left:494px;top:531px;color:#404040">Items</div>
<div class="a" style="left:543px;top:525px;width:67px;height:24px;background:#fcfcfc;border:1px solid #dadada;border-radius:2px"></div>
<div class="t" style="left:556px;top:531px;color:#404040">Buttons</div>
<svg style="left:1036px;top:532px" width="28" height="12"><path d="M0 0.5 H12 M0 3.5 H12 M0 6.5 H12 M0 9.5 H12" stroke="#444" stroke-width="1"/><path d="M17.5 3 L21.7 7.2 L25.9 3" fill="none" stroke="#555" stroke-width="1.1"/></svg>
<div class="ln" style="left:397px;top:557px;width:682px;height:1px;background:#ececec"></div>
<div class="a" style="left:1071px;top:558px;width:8px;height:85px;background:#a3a3a3"></div>
<svg style="left:438px;top:584px" width="31" height="13"><path d="M2 0.6 H24.3 L29.2 6.3 L24.3 12 H2 A1.4 1.4 0 0 1 0.6 10.6 V2 A1.4 1.4 0 0 1 2 0.6 Z M7.2 0.6 L11.8 6.3 L7.2 12 M15.8 0.6 L20.6 6.3 L15.8 12" fill="none" stroke="#7cbcef" stroke-width="1.1" stroke-linejoin="miter"/></svg>
<svg style="left:541px;top:576px" width="25" height="27"><path d="M4.6 3.75 H2 A1.45 1.45 0 0 0 0.55 5.2 V25.1 A1.45 1.45 0 0 0 2 26.55 H22.1 A1.45 1.45 0 0 0 23.55 25.1 V5.2 A1.45 1.45 0 0 0 22.1 3.75 H19.3 M8.3 3.75 H15.3 M6.5 0.4 V5.4 M17.4 0.4 V5.4 M0.55 7.4 H23.55" fill="none" stroke="#7cbcef" stroke-width="1.1"/><g fill="#7cbcef"><rect x="8.8" y="11.9" width="2.2" height="2.2"/><rect x="12.9" y="11.9" width="2.2" height="2.2"/><rect x="16.9" y="11.9" width="2.2" height="2.2"/><rect x="4.9" y="15.7" width="2.2" height="2.2"/><rect x="8.8" y="15.7" width="2.2" height="2.2"/><rect x="12.9" y="15.7" width="2.2" height="2.2"/><rect x="16.9" y="15.7" width="2.2" height="2.2"/><rect x="4.9" y="19.9" width="2.2" height="2.2"/><rect x="8.8" y="19.9" width="2.2" height="2.2"/><rect x="12.9" y="19.9" width="2.2" height="2.2"/></g></svg>
<svg style="left:638px;top:579px" width="30" height="23"><rect x="0.6" y="0.6" width="27.7" height="21" rx="1.5" fill="none" stroke="#7cbcef" stroke-width="1.1"/><path d="M0.6 7.6 H28.3 M0.6 14.6 H28.3 M14.6 0.6 V21.6" stroke="#7cbcef" stroke-width="1.1"/></svg>
<svg style="left:738px;top:578px" width="30" height="27"><rect x="10.6" y="0.6" width="8.4" height="25" rx="1" fill="none" stroke="#7cbcef" stroke-width="1.1"/><path d="M10.6 9 H19 M10.6 17.2 H19 M5 9 L1 13 L5 17 M25 9 L29 13 L25 17" fill="none" stroke="#7cbcef" stroke-width="1.1"/></svg>
<svg style="left:838px;top:575px" width="30" height="30"><circle cx="14.8" cy="15" r="13.6" fill="none" stroke="#7cbcef" stroke-width="1.1"/><path d="M10.8 11 A4 4 0 1 1 16.2 14.8 C15 15.4 14.8 16.2 14.8 17.8" fill="none" stroke="#7cbcef" stroke-width="1.1"/><circle cx="14.8" cy="21.3" r="0.9" fill="#7cbcef"/></svg>
<svg style="left:937px;top:578px" width="33" height="26"><path d="M0.6 0 V24.6 H32" fill="none" stroke="#7cbcef" stroke-width="1.1"/><rect x="4.2" y="14.6" width="4" height="10" fill="none" stroke="#7cbcef" stroke-width="1.1"/><rect x="11.2" y="6.6" width="4" height="18" fill="none" stroke="#7cbcef" stroke-width="1.1"/><rect x="18.2" y="2.6" width="4" height="22" fill="none" stroke="#7cbcef" stroke-width="1.1"/><rect x="25.2" y="10.6" width="4" height="14" fill="none" stroke="#7cbcef" stroke-width="1.1"/></svg>
<svg style="left:438px;top:673px" width="30" height="26"><path d="M14.8 19.4 H2.5 A1 1 0 0 1 1.5 18.4 V2.5 A1 1 0 0 1 2.5 1.5 H27.4 A1 1 0 0 1 28.4 2.5 V10.4 M1.5 7.25 H28.4 M8.5 1.5 V19.4 M18.5 1.5 V10.4 M1.5 13.3 H14.8" fill="none" stroke="#7cbcef" stroke-width="1.1"/><path d="M19.3 13.4 C20.8 13.3 22.5 13.5 22.5 14.6 C22.5 13.5 24.2 13.3 25.8 13.4 M22.5 14.6 V22.4 M20.3 18.4 H24.7 M19.3 23.5 C20.8 23.6 22.5 23.4 22.5 22.4 C22.5 23.4 24.2 23.6 25.8 23.5" fill="none" stroke="#7cbcef" stroke-width="1.1"/></svg>
<svg style="left:538px;top:671px" width="31" height="26"><path d="M18.7 6.4 H1.6 A1 1 0 0 0 0.6 7.4 V23.1 A1 1 0 0 0 1.6 24.1 H21.5 A1 1 0 0 0 22.5 23.1 V16.3 M0.6 12.4 H18.7 M0.6 18.4 H22.5 M11.4 6.4 V24.1" fill="none" stroke="#7cbcef" stroke-width="1.1"/><path d="M21.3 1.4 L29.1 8.7 L25.8 9.4 L28.3 15.9 L26.8 16.5 L24.2 10.4 L21.6 12.5 Z" fill="#7cbcef"/></svg>
<svg style="left:638px;top:673px" width="30" height="20"><circle cx="2.5" cy="2.5" r="1.4" fill="#7cbcef"/><circle cx="2.5" cy="10.3" r="1.4" fill="#7cbcef"/><circle cx="2.5" cy="18.3" r="1.4" fill="#7cbcef"/><path d="M9.4 2.5 H28.5 M9.4 10.3 H28.5 M9.4 18.3 H28.5" stroke="#7cbcef" stroke-width="1.1"/></svg>
<svg style="left:740px;top:669px" width="27" height="29"><path d="M0.9 4.3 H13 M0.9 14.3 H25 M0.9 24.3 H13 M21.4 0.8 L24.9 4.4 L21.4 8 M21.4 20.8 L24.9 24.4 L21.4 28" fill="none" stroke="#7cbcef" stroke-width="1.1"/></svg>
<svg style="left:838px;top:670px" width="30" height="28"><path d="M14.7 24.2 C12.3 20.6 7.3 14 7.3 7.9 A7.4 7.4 0 0 1 22.1 7.9 C22.1 14 17.1 20.6 14.7 24.2 Z" fill="none" stroke="#7cbcef" stroke-width="1.1" stroke-linejoin="round"/><circle cx="14.7" cy="7.7" r="2.6" fill="none" stroke="#7cbcef" stroke-width="1.1"/><path d="M10.6 21.3 H6.6 L1 27.3 H28.6 L23 21.3 H18.8" fill="none" stroke="#7cbcef" stroke-width="1.1"/></svg>
<svg style="left:938px;top:669px" width="30" height="30"><path d="M5.2 1.2 V24.4 A3 3 0 0 0 8.2 27.4 H14.6 M1.3 5.2 L5.2 1.2 L9.1 5.2" fill="none" stroke="#7cbcef" stroke-width="1.1"/><path d="M14.7 3.2 H20.8 A3 3 0 0 1 23.8 6.2 V28.4 M19.9 24.5 L23.8 28.4 L27.7 24.5" fill="none" stroke="#7cbcef" stroke-width="1.1"/><path d="M10 11 H19.3 M10 14.6 H19.3 M10 19.2 H19.3" stroke="#7cbcef" stroke-width="1.1"/></svg>
<div class="t" style="left:393px;width:120px;text-align:center;top:608px;font-size:11px;line-height:11px;color:#707070">Breadcrumb</div>
<div class="t" style="left:493px;width:120px;text-align:center;top:608px;font-size:11px;line-height:11px;color:#707070">Calendar</div>
<div class="t" style="left:593px;width:120px;text-align:center;top:608px;font-size:11px;line-height:11px;color:#707070">Classic Report</div>
<div class="t" style="left:693px;width:120px;text-align:center;top:608px;font-size:11px;line-height:11px;color:#707070">Column Toggle</div>
<div class="t" style="left:793px;width:120px;text-align:center;top:608px;font-size:11px;line-height:11px;color:#707070">Help Text</div>
<div class="t" style="left:893px;width:120px;text-align:center;top:608px;font-size:11px;line-height:11px;color:#707070">Chart</div>
<div class="t" style="left:693px;width:120px;text-align:center;top:622px;font-size:11px;line-height:11px;color:#707070">Report</div>
<div class="t" style="left:393px;width:120px;text-align:center;top:702px;font-size:11px;line-height:11px;color:#707070">Interactive Grid</div>
<div class="t" style="left:493px;width:120px;text-align:center;top:702px;font-size:11px;line-height:11px;color:#707070">Interactive Report</div>
<div class="t" style="left:593px;width:120px;text-align:center;top:702px;font-size:11px;line-height:11px;color:#707070">List</div>
<div class="t" style="left:693px;width:120px;text-align:center;top:702px;font-size:11px;line-height:11px;color:#707070">List View</div>
<div class="t" style="left:793px;width:120px;text-align:center;top:702px;font-size:11px;line-height:11px;color:#707070">Map Chart</div>
<div class="t" style="left:893px;width:120px;text-align:center;top:702px;font-size:11px;line-height:11px;color:#707070">PL/SQL Dynamic</div>

<!-- ============ RIGHT PANEL ============ -->
<div class="ln" style="left:1087px;top:168px;width:287px;height:1px"></div>
<svg style="left:1104px;top:138px" width="17" height="17"><circle cx="6.5" cy="6.5" r="5.9" fill="none" stroke="#777" stroke-width="1.1"/><path d="M10.7 10.7 L15 15" stroke="#777" stroke-width="1.2"/></svg>
<div class="t" style="left:1128px;top:140px;color:#aaa">Filter</div>
<svg style="left:1328px;top:139px" width="30" height="14"><path d="M0.6 0.5 C1.5 5.5 5 8.6 13.5 8.6 M10.2 5.3 L13.6 8.6 L10.2 12" fill="none" stroke="#444" stroke-width="1.1"/><path d="M19.5 5 L23.7 9.2 L27.9 5" fill="none" stroke="#555" stroke-width="1.1"/></svg>
<div class="a" style="left:1087px;top:169px;width:282px;height:549px;background:#f0f0f0"></div>
<div class="a" style="left:1369px;top:169px;width:5px;height:130px;background:#a3a3a3"></div>
<div class="a" style="left:1369px;top:299px;width:5px;height:419px;background:#fcfcfc"></div>
<div class="a" style="left:1087px;top:185px;width:282px;height:108px;background:#fcfcfc"></div>
<div class="a" style="left:1087px;top:308px;width:282px;height:124px;background:#fcfcfc"></div>
<div class="a" style="left:1087px;top:447px;width:282px;height:280px;background:#fcfcfc"></div>
<div class="a" style="left:1095px;top:195px;width:16px;height:16px;background:#d2d2d2;border-radius:2px"></div><svg style="left:1098px;top:201px" width="10" height="6"><path d="M0.8 0.6 L4.9 4.5 L9 0.6" fill="none" stroke="#fff" stroke-width="1.2"/></svg><div class="t" style="left:1117px;top:196px;font-size:14px;line-height:14px;font-weight:bold;color:#2a2a2a;letter-spacing:-0.33px">Identification</div>
<div class="a" style="left:1095px;top:318px;width:16px;height:16px;background:#d2d2d2;border-radius:2px"></div><svg style="left:1098px;top:324px" width="10" height="6"><path d="M0.8 0.6 L4.9 4.5 L9 0.6" fill="none" stroke="#fff" stroke-width="1.2"/></svg><div class="t" style="left:1117px;top:319px;font-size:14px;line-height:14px;font-weight:bold;color:#2a2a2a;letter-spacing:-0.33px">Source</div>
<div class="a" style="left:1095px;top:457px;width:16px;height:16px;background:#d2d2d2;border-radius:2px"></div><svg style="left:1098px;top:463px" width="10" height="6"><path d="M0.8 0.6 L4.9 4.5 L9 0.6" fill="none" stroke="#fff" stroke-width="1.2"/></svg><div class="t" style="left:1117px;top:458px;font-size:14px;line-height:14px;font-weight:bold;color:#2a2a2a;letter-spacing:-0.33px">Layout</div>
<div class="t" style="left:1096px;top:235px;color:#555">Title</div>
<div class="t" style="left:1212px;top:235px;color:#333">Combined graph</div>
<div class="a" style="left:1211px;top:252px;width:146px;height:1px;background:#d8d8d8"></div>
<div class="t" style="left:1096px;top:267px;color:#555">Type</div>
<div class="t" style="left:1212px;top:267px;color:#333">Chart</div>
<div class="a" style="left:1211px;top:284px;width:106px;height:1px;background:#d8d8d8"></div>
<svg style="left:1300px;top:270px" width="11" height="6"><path d="M0.6 0.6 L4.9 4.8 L9.2 0.6" fill="none" stroke="#444" stroke-width="1.1"/></svg>
<div class="a" style="left:1329px;top:261px;width:32px;height:24px;border:1px solid #d6d6d6;border-radius:2px;background:#fcfcfc"></div><svg style="left:1338px;top:267px" width="15" height="12"><circle cx="0.9" cy="1" r="1.45" fill="#444"/><circle cx="0.9" cy="6.2" r="1.45" fill="#444"/><circle cx="0.9" cy="11.3" r="1.45" fill="#444"/><path d="M4.5 1.3 H13.4 M4.5 6.2 H13.4 M4.5 11.1 H13.4" stroke="#444" stroke-width="1"/></svg>
<div class="t" style="left:1095px;top:358px;color:#555">Location</div>
<div class="t" style="left:1212px;top:358px;color:#333">- Select -</div>
<div class="a" style="left:1211px;top:375px;width:146px;height:1px;background:#d8d8d8"></div>
<svg style="left:1340px;top:362px" width="11" height="6"><path d="M0.6 0.6 L4.9 4.8 L9.2 0.6" fill="none" stroke="#444" stroke-width="1.1"/></svg>
<div class="t" style="left:1095px;top:390px;color:#555">Page Items to</div>
<div class="t" style="left:1095px;top:406px;color:#555">Submit</div>
<div class="a" style="left:1211px;top:415px;width:106px;height:1px;background:#d8d8d8"></div>
<div class="a" style="left:1329px;top:392px;width:32px;height:24px;border:1px solid #d6d6d6;border-radius:2px;background:#fcfcfc"></div><svg style="left:1339px;top:401px" width="12" height="7"><path d="M0.6 5.8 L5.8 0.8 L11 5.8" fill="none" stroke="#444" stroke-width="1.1"/></svg>
<div class="t" style="left:1096px;top:497px;color:#555">Sequence</div>
<div class="t" style="left:1212px;top:497px;color:#333">10</div>
<div class="a" style="left:1211px;top:514px;width:146px;height:1px;background:#d8d8d8"></div>
<div class="t" style="left:1095px;top:529px;color:#555">Parent Region</div>
<div class="t" style="left:1212px;top:529px;color:#333">- Select -</div>
<div class="a" style="left:1211px;top:546px;width:106px;height:1px;background:#d8d8d8"></div>
<svg style="left:1300px;top:532px" width="11" height="6"><path d="M0.6 0.6 L4.9 4.8 L9.2 0.6" fill="none" stroke="#444" stroke-width="1.1"/></svg>
<div class="a" style="left:1329px;top:523px;width:32px;height:24px;border:1px solid #e2e2e2;border-radius:2px;background:#fcfcfc"></div>
<svg style="left:1343px;top:530px" width="7" height="11"><path d="M0.6 0.6 L5.2 5.2 L0.6 9.8" fill="none" stroke="#bbb" stroke-width="1.1"/></svg>
<div class="t" style="left:1096px;top:561px;color:#555">Position</div>
<div class="t" style="left:1212px;top:561px;color:#333">Content Body</div>
<div class="a" style="left:1211px;top:578px;width:106px;height:1px;background:#d8d8d8"></div>
<svg style="left:1300px;top:564px" width="11" height="6"><path d="M0.6 0.6 L4.9 4.8 L9.2 0.6" fill="none" stroke="#444" stroke-width="1.1"/></svg>
<div class="a" style="left:1329px;top:555px;width:32px;height:24px;border:1px solid #d6d6d6;border-radius:2px;background:#fcfcfc"></div><svg style="left:1338px;top:561px" width="15" height="12"><circle cx="0.9" cy="1" r="1.45" fill="#444"/><circle cx="0.9" cy="6.2" r="1.45" fill="#444"/><circle cx="0.9" cy="11.3" r="1.45" fill="#444"/><path d="M4.5 1.3 H13.4 M4.5 6.2 H13.4 M4.5 11.1 H13.4" stroke="#444" stroke-width="1"/></svg>
<div class="t" style="left:1096px;top:593px;color:#555">Start New Row</div>
<div class="a" style="left:1208px;top:587px;width:48px;height:24px;border:1px solid #cfcfcf;border-radius:2px;background:#e8e8e8"></div>
<div class="t" style="left:1221px;top:593px;color:#333;font-weight:bold">Yes</div>
<div class="t" style="left:1271px;top:593px;color:#333">No</div>
<div class="t" style="left:1095px;top:625px;color:#555">Column</div>
<div class="t" style="left:1212px;top:625px;color:#333">Automatic</div>
<div class="a" style="left:1211px;top:642px;width:146px;height:1px;background:#d8d8d8"></div>
<svg style="left:1340px;top:628px" width="11" height="6"><path d="M0.6 0.6 L4.9 4.8 L9.2 0.6" fill="none" stroke="#444" stroke-width="1.1"/></svg>
<div class="t" style="left:1095px;top:657px;color:#555">Column Span</div>
<div class="t" style="left:1212px;top:657px;color:#333">Automatic</div>
<div class="a" style="left:1211px;top:674px;width:146px;height:1px;background:#d8d8d8"></div>
<svg style="left:1340px;top:660px" width="11" height="6"><path d="M0.6 0.6 L4.9 4.8 L9.2 0.6" fill="none" stroke="#444" stroke-width="1.1"/></svg>
<div class="t" style="left:1095px;top:689px;color:#555">Column CSS</div>
<div class="t" style="left:1095px;top:705px;color:#555">Classes</div>
<div class="a" style="left:1211px;top:714px;width:106px;height:1px;background:#d8d8d8"></div>
<div class="a" style="left:1329px;top:692px;width:32px;height:24px;border:1px solid #d6d6d6;border-radius:2px;background:#fcfcfc"></div><svg style="left:1339px;top:701px" width="12" height="7"><path d="M0.6 5.8 L5.8 0.8 L11 5.8" fill="none" stroke="#444" stroke-width="1.1"/></svg>

<!-- window bottom edge -->
<div class="a" style="left:0;top:717px;width:1374px;height:1px;background:#111"></div>
<svg style="left:0;top:712px" width="6" height="6"><path d="M0 0 V6 H6 V5 A5 5 0 0 1 0 0 Z" fill="#111"/></svg>
<svg style="left:1368px;top:712px" width="6" height="6"><path d="M6 0 V6 H0 V5 A5 5 0 0 0 6 0 Z" fill="#111"/></svg>
</body></html>
